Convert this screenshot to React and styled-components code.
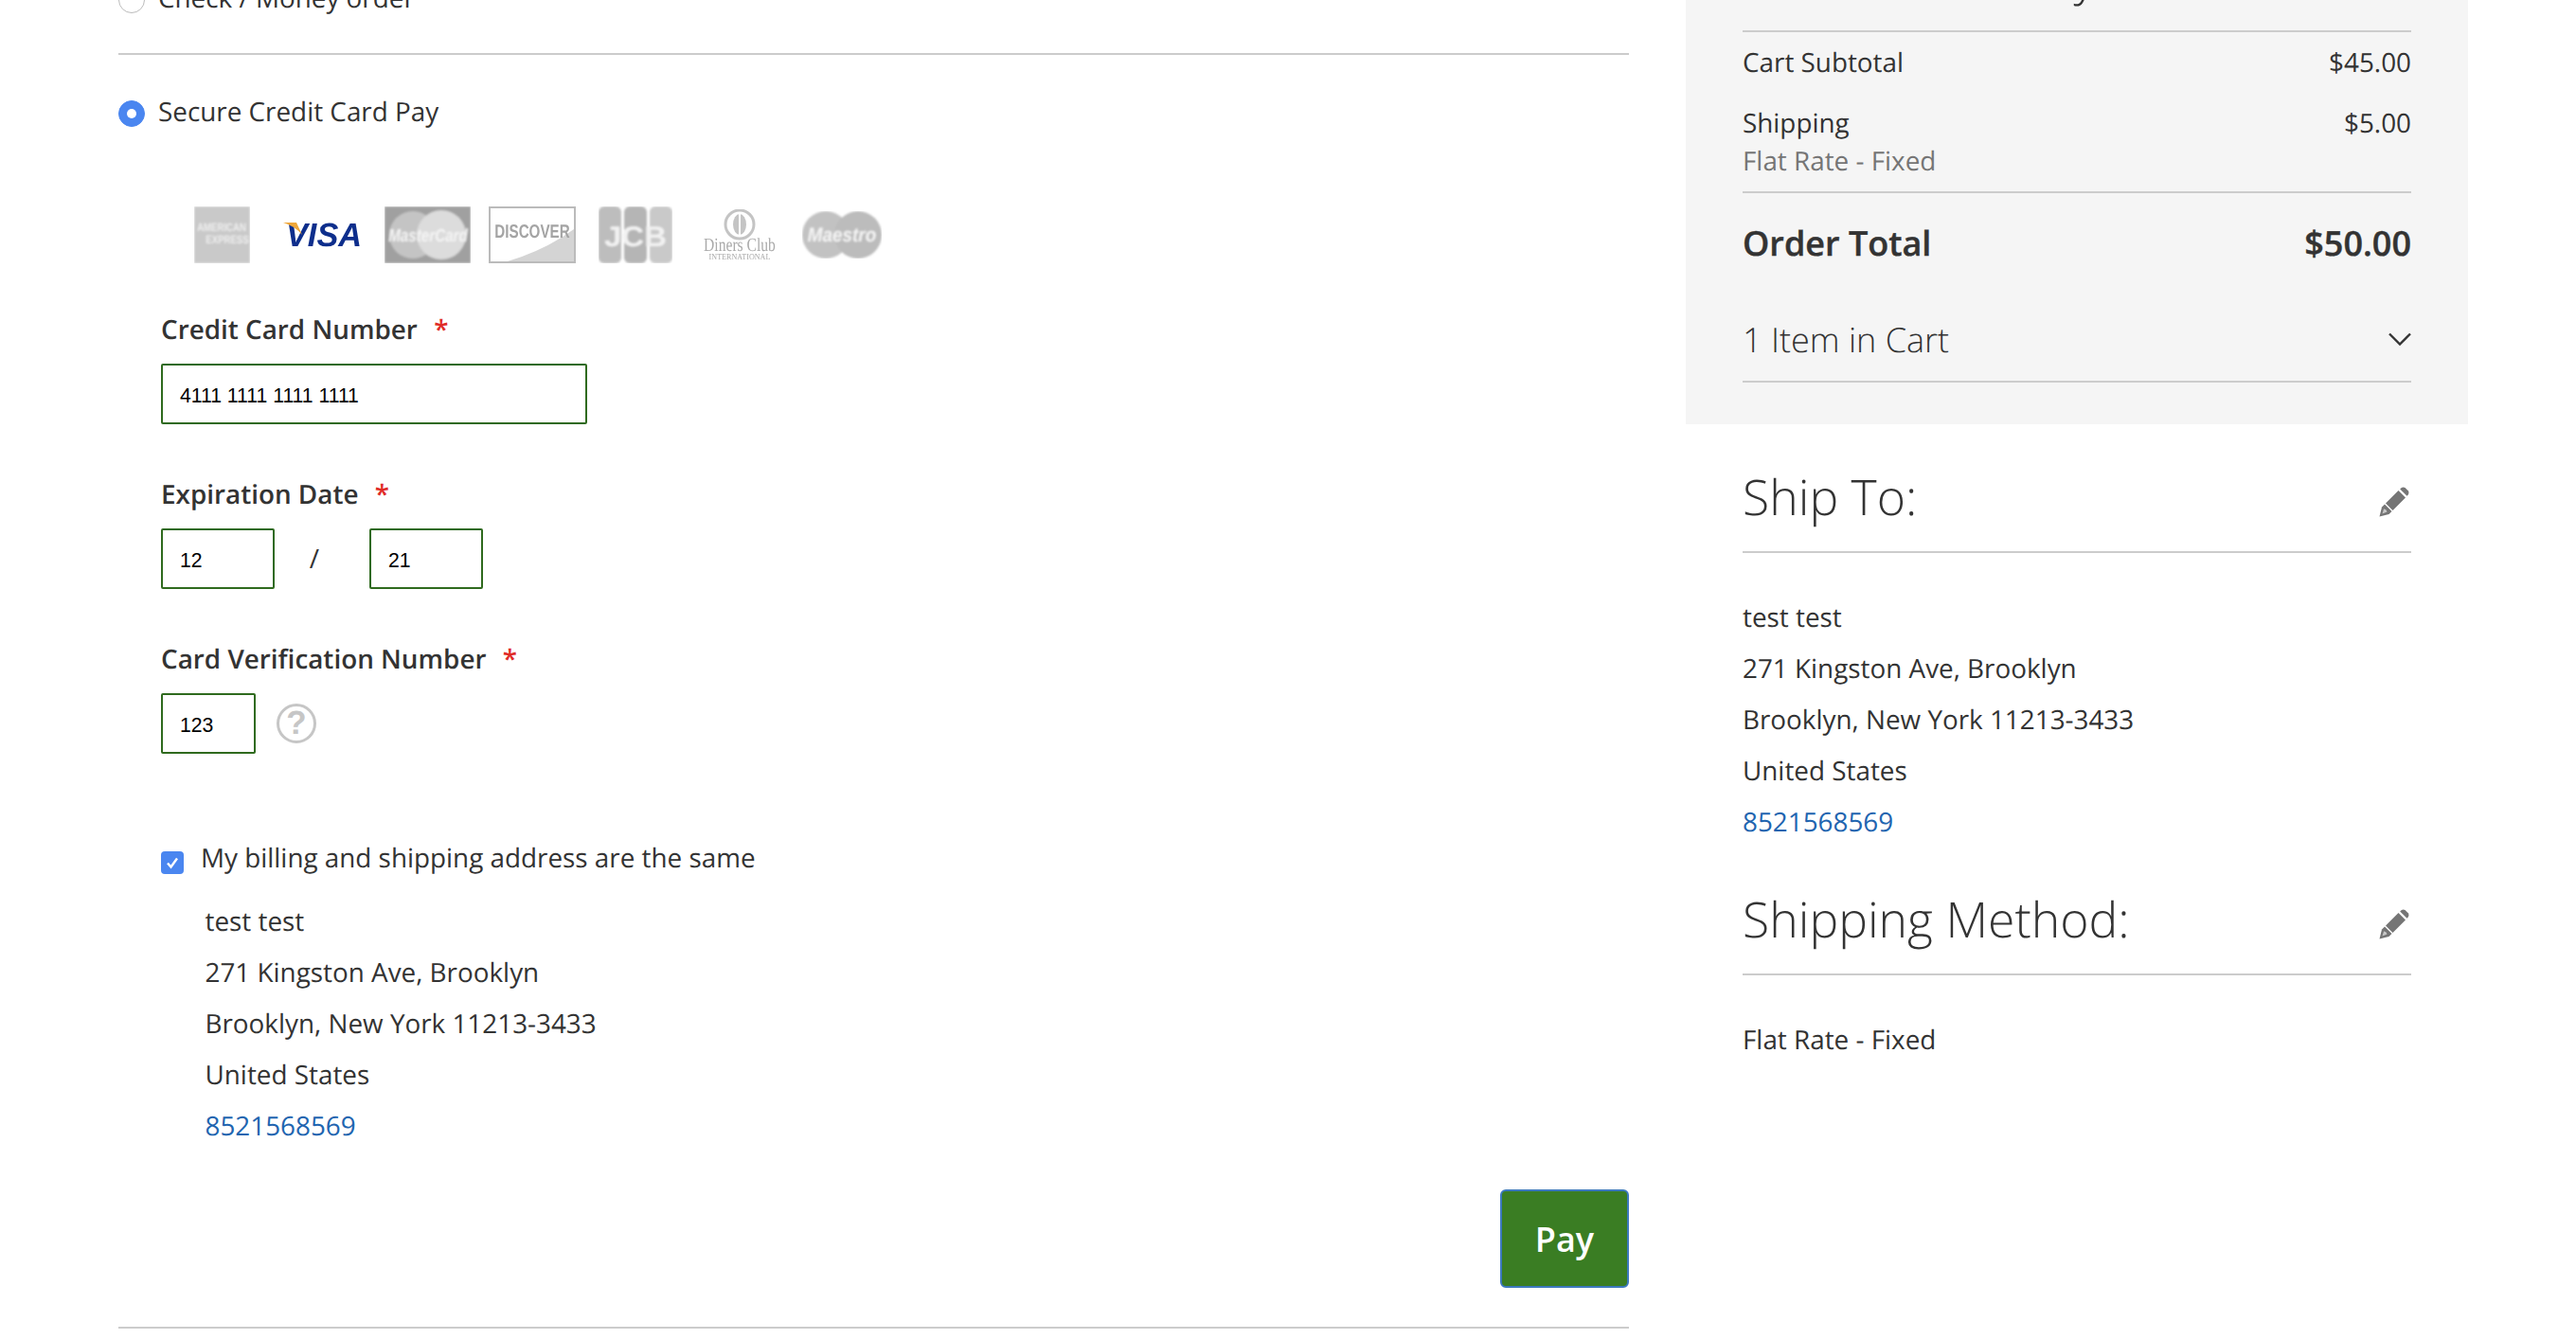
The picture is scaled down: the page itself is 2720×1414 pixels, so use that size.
import React from 'react';
import styled, { createGlobalStyle } from 'styled-components';

const Global = createGlobalStyle`
  html, body { margin: 0; padding: 0; background: #fff; }
  body {
    font-family: "Open Sans", "Liberation Sans", sans-serif;
    color: #333;
    font-size: 27.85px;
    overflow: hidden;
    text-rendering: geometricPrecision;
  }
  * { box-sizing: border-box; }
`;

const Page = styled.div`
  width: 2720px;
  height: 1471px;
  margin-top: -57px;
  padding-left: 125px;
  display: grid;
  grid-template-columns: 1595px 826px;
  column-gap: 60px;
  align-items: start;
`;

const Payment = styled.div`
  padding-top: 39px;
`;

const MethodRow = styled.div`
  display: flex;
  align-items: center;
  height: 36px;
  gap: 14px;
`;

const MethodDivider = styled.div`
  height: 2px;
  background: #ccc;
  margin: ${p => p.$top}px 0 ${p => p.$bottom}px;
`;

const Radio = styled.span`
  width: 28px;
  height: 28px;
  border-radius: 50%;
  flex: none;
  background: ${p => (p.$on ? '#4a86f0' : '#fff')};
  border: 1px solid ${p => (p.$on ? '#4a86f0' : '#bbb')};
  display: flex;
  align-items: center;
  justify-content: center;
  &::after {
    content: '';
    display: ${p => (p.$on ? 'block' : 'none')};
    width: 10px;
    height: 10px;
    border-radius: 50%;
    background: #fff;
  }
`;

const MethodLabel = styled.span`
  padding-bottom: 4px;
  line-height: 32px;
`;

const CardRow = styled.div`
  display: flex;
  align-items: center;
  height: 60px;
  margin-top: 80px;
  padding-left: 80px;
`;

const CardMark = styled.svg`
  display: block;
  flex: none;
  margin-left: ${p => p.$gap || 0}px;
`;

const Field = styled.div`
  margin-top: ${p => p.$top}px;
  padding-left: 45px;
`;

const FieldLabel = styled.div`
  font-weight: 600;
  line-height: 40px;
  color: #333;
  margin-bottom: 16px;
  span {
    color: #e02b27;
    margin-left: 10px;
  }
`;

const Inputs = styled.div`
  display: flex;
  align-items: center;
`;

const TextBox = styled.input`
  display: block;
  width: ${p => p.$w}px;
  height: 64px;
  border: 2px solid #2f6a1e;
  border-radius: 2px;
  padding: 4px 0 0 18px;
  margin: 0;
  outline: none;
  font-family: "Liberation Sans", Arial, sans-serif;
  font-size: 21.2px;
  color: #000;
  background: #fff;
`;

const Slash = styled.span`
  width: 100px;
  text-align: center;
  font-size: 28px;
  color: #333;
  padding-right: 16px;
`;

const Help = styled.span`
  width: 42px;
  height: 42px;
  margin-left: 22px;
  border-radius: 50%;
  border: 3px solid #c6c6c6;
  color: #c6c6c6;
  font-family: "Liberation Sans", Arial, sans-serif;
  font-weight: 700;
  font-size: 35px;
  line-height: 36px;
  text-align: center;
`;

const SameRow = styled.div`
  display: flex;
  align-items: center;
  gap: 18px;
  height: 40px;
  margin-top: 90px;
  padding-left: 45px;
`;

const Check = styled.span`
  width: 24px;
  height: 24px;
  flex: none;
  margin-top: 10px;
  border-radius: 4px;
  background: #4a86f0;
  display: flex;
  align-items: center;
  justify-content: center;
`;

const Address = styled.div`
  line-height: 54px;
  margin-top: ${p => p.$top}px;
  padding-left: ${p => p.$left || 0}px;
`;

const Phone = styled.a`
  color: #1f65b0;
  text-decoration: none;
`;

const PayRow = styled.div`
  display: flex;
  justify-content: flex-end;
  margin-top: 40px;
`;

const PayButton = styled.button`
  width: 136px;
  height: 104px;
  background: #3a7d23;
  border: 2px solid #3d79bf;
  border-radius: 6px;
  color: #fff;
  font-family: "Open Sans", sans-serif;
  font-weight: 600;
  font-size: 36px;
  padding: 0;
`;

const Aside = styled.div``;

const SummaryPanel = styled.div`
  background: #f5f5f5;
  padding: 0 60px 44px;
`;

const Title = styled.div`
  display: flex;
  justify-content: space-between;
  align-items: center;
  font-weight: 300;
  font-size: 51.7px;
  line-height: 64px;
  padding-bottom: 25px;
  border-bottom: 2px solid #ccc;
  margin-top: ${p => p.$top || 0}px;
`;

const Titled = styled.div`
  padding: 0 60px;
`;

const Line = styled.div`
  display: flex;
  justify-content: space-between;
  line-height: 40px;
  margin-top: ${p => p.$top}px;
`;

const Note = styled.div`
  color: #757575;
  line-height: 40px;
  padding-bottom: 12px;
  border-bottom: 2px solid #ccc;
`;

const TotalLine = styled.div`
  display: flex;
  justify-content: space-between;
  font-weight: 600;
  font-size: 36px;
  line-height: 50px;
  margin-top: 28px;
  -webkit-text-stroke: 0.4px #333;
`;

const CartLine = styled.div`
  display: flex;
  justify-content: space-between;
  align-items: center;
  font-weight: 300;
  font-size: 36px;
  line-height: 50px;
  margin-top: 52px;
  padding-bottom: 18px;
  border-bottom: 2px solid #ccc;
  svg {
    margin-top: -2px;
  }
`;

const EditMark = styled.svg`
  display: block;
  margin: 10px 2px 0 0;
`;

const Edit = () => (
  <EditMark width="32" height="32" viewBox="0 0 32 32">
    <path d="M0.5 31.5 L3 21.5 L6 18.5 L13.5 26 L10.5 29 Z" fill="#757575" />
    <path d="M3.5 28.5 L5 23.5 Q7.5 23 8.5 26.5 Z" fill="#c8c8c8" />
    <path d="M7 17.5 L20.5 4 L28 11.5 L14.5 25 Z" fill="#757575" />
    <path d="M22.2 2.5 L23.5 1.2 Q25.5 -.2 27.5 1 L30.8 4.3 Q32 6.3 30.8 8.3 L29.5 9.8 Z" fill="#757575" />
  </EditMark>
);

const Soft = ({ children, w, h, gap, blur = 0.8 }) => (
  <CardMark width={w} height={h} viewBox={`0 0 ${w} ${h}`} $gap={gap}>
    <defs>
      <filter id={`soft${w}${h}`} x="-5%" y="-5%" width="110%" height="110%">
        <feGaussianBlur stdDeviation={blur} />
      </filter>
    </defs>
    <g filter={`url(#soft${w}${h})`} fontFamily="'Liberation Sans', Arial, sans-serif">{children}</g>
  </CardMark>
);

// squeezed logo lettering, centred on x
const Mark = ({ x, y, sx = 1, children, ...rest }) => (
  <text transform={`translate(${x} ${y}) scale(${sx} 1)`} textAnchor="middle" {...rest}>{children}</text>
);

const CardIcons = () => (
  <CardRow>
    <Soft w={59} h={60}>
      <rect x="0" y="0" width="59" height="60" fill="#c9c9c9" />
      <Mark x={29} y={26} sx={0.8} fontSize="12" fontWeight="700" fill="#eee">AMERICAN</Mark>
      <Mark x={35} y={39} sx={0.8} fontSize="12" fontWeight="700" fill="#eee">EXPRESS</Mark>
    </Soft>
    <Soft w={84} h={42} gap={35} blur={0.5}>
      <Mark x={43} y={33} sx={0.98} fontSize="35" fontWeight="700" fontStyle="italic" fill="#0f2f8c">VISA</Mark>
      <path d="M0 8 L14 8 L20 21 Q13 12 0 8 Z" fill="#efa73a" />
    </Soft>
    <Soft w={91} h={60} gap={23}>
      <rect width="91" height="60" fill="#a0a0a0" />
      <circle cx="30" cy="30" r="25" fill="#c4c4c4" />
      <circle cx="60" cy="30" r="26" fill="#dcdcdc" />
      <Mark x={46} y={37} sx={0.8} fontSize="19" fontWeight="700" fontStyle="italic" fill="#f4f4f4">MasterCard</Mark>
    </Soft>
    <Soft w={92} h={60} gap={19} blur={0.6}>
      <rect x="1" y="1" width="90" height="58" fill="#fff" stroke="#bbb" strokeWidth="2" />
      <path d="M20 58 Q60 46 90 24 L90 58 Z" fill="#d4d4d4" />
      <Mark x={46} y={33} sx={0.76} fontSize="20" fontWeight="700" fill="#a4a4a4">DISCOVER</Mark>
    </Soft>
    <Soft w={78} h={60} gap={24}>
      <rect x="0" y="0" width="24" height="60" rx="6" fill="#bdbdbd" />
      <rect x="27" y="0" width="24" height="60" rx="6" fill="#b5b5b5" />
      <rect x="54" y="0" width="24" height="60" rx="6" fill="#c9c9c9" />
      <Mark x={39} y={42} sx={1.1} fontSize="30" fontWeight="700" fill="#f2f2f2">JCB</Mark>
    </Soft>
    <Soft w={76} h={54} gap={33} blur={0.6}>
      <circle cx="38" cy="16" r="15" fill="#fff" stroke="#c4c4c4" strokeWidth="3" />
      <ellipse cx="38" cy="16" rx="7" ry="11" fill="#c4c4c4" />
      <rect x="37" y="3" width="2" height="26" fill="#fff" />
      <Mark x={38} y={44} sx={0.78} fontSize="20" fontFamily="'Liberation Serif', serif" fill="#aaa">Diners Club</Mark>
      <Mark x={38} y={53} sx={0.9} fontSize="9" fontFamily="'Liberation Serif', serif" fill="#aaa">INTERNATIONAL</Mark>
    </Soft>
    <Soft w={84} h={50} gap={28}>
      <circle cx="25" cy="25" r="25" fill="#c2c2c2" />
      <circle cx="59" cy="25" r="25" fill="#bcbcbc" />
      <Mark x={42} y={32} sx={0.9} fontSize="21" fontWeight="700" fontStyle="italic" fill="#f4f4f4">Maestro</Mark>
    </Soft>
  </CardRow>
);

const Lines = ({ top, left }) => (
  <Address $top={top} $left={left}>
    <div>test test</div>
    <div>271 Kingston Ave, Brooklyn</div>
    <div>Brooklyn, New York 11213-3433</div>
    <div>United States</div>
    <div><Phone href="#">8521568569</Phone></div>
  </Address>
);

export default function App() {
  return (
    <>
      <Global />
      <Page>
        <Payment>
          <MethodRow>
            <Radio />
            <MethodLabel>Check / Money order</MethodLabel>
          </MethodRow>
          <MethodDivider $top={38} $bottom={44} />
          <MethodRow>
            <Radio $on />
            <MethodLabel>Secure Credit Card Pay</MethodLabel>
          </MethodRow>
          <CardIcons />
          <Field $top={50}>
            <FieldLabel>Credit Card Number <span>*</span></FieldLabel>
            <TextBox $w={450} readOnly value="4111 1111 1111 1111" />
          </Field>
          <Field $top={54}>
            <FieldLabel>Expiration Date <span>*</span></FieldLabel>
            <Inputs>
              <TextBox $w={120} readOnly value="12" />
              <Slash>/</Slash>
              <TextBox $w={120} readOnly value="21" />
            </Inputs>
          </Field>
          <Field $top={54}>
            <FieldLabel>Card Verification Number <span>*</span></FieldLabel>
            <Inputs>
              <TextBox $w={100} readOnly value="123" />
              <Help>?</Help>
            </Inputs>
          </Field>
          <SameRow>
            <Check>
              <svg width="14" height="14" viewBox="0 0 14 14" fill="none" stroke="#fff" strokeWidth="2.4">
                <path d="M2 7.5 L5.5 11.5 L12 2.5" />
              </svg>
            </Check>
            <span>My billing and shipping address are the same</span>
          </SameRow>
          <Lines top={20} left={91.5} />
          <PayRow>
            <PayButton>Pay</PayButton>
          </PayRow>
          <MethodDivider $top={41} $bottom={0} />
        </Payment>
        <Aside>
          <SummaryPanel>
            <Title>Order Summary</Title>
            <Line $top={12}><span>Cart Subtotal</span><span>$45.00</span></Line>
            <Line $top={24}><span>Shipping</span><span>$5.00</span></Line>
            <Note>Flat Rate - Fixed</Note>
            <TotalLine><span>Order Total</span><span>$50.00</span></TotalLine>
            <CartLine>
              <span>1 Item in Cart</span>
              <svg width="24" height="14" viewBox="0 0 24 14" fill="none" stroke="#333" strokeWidth="2.4">
                <path d="M1 1.5 L12 12.5 L23 1.5" />
              </svg>
            </CartLine>
          </SummaryPanel>
          <Titled>
            <Title $top={45}>Ship To:<Edit /></Title>
            <Lines top={41} />
            <Title $top={44}>Shipping Method:<Edit /></Title>
            <Address $top={41}>Flat Rate - Fixed</Address>
          </Titled>
        </Aside>
      </Page>
    </>
  );
}
